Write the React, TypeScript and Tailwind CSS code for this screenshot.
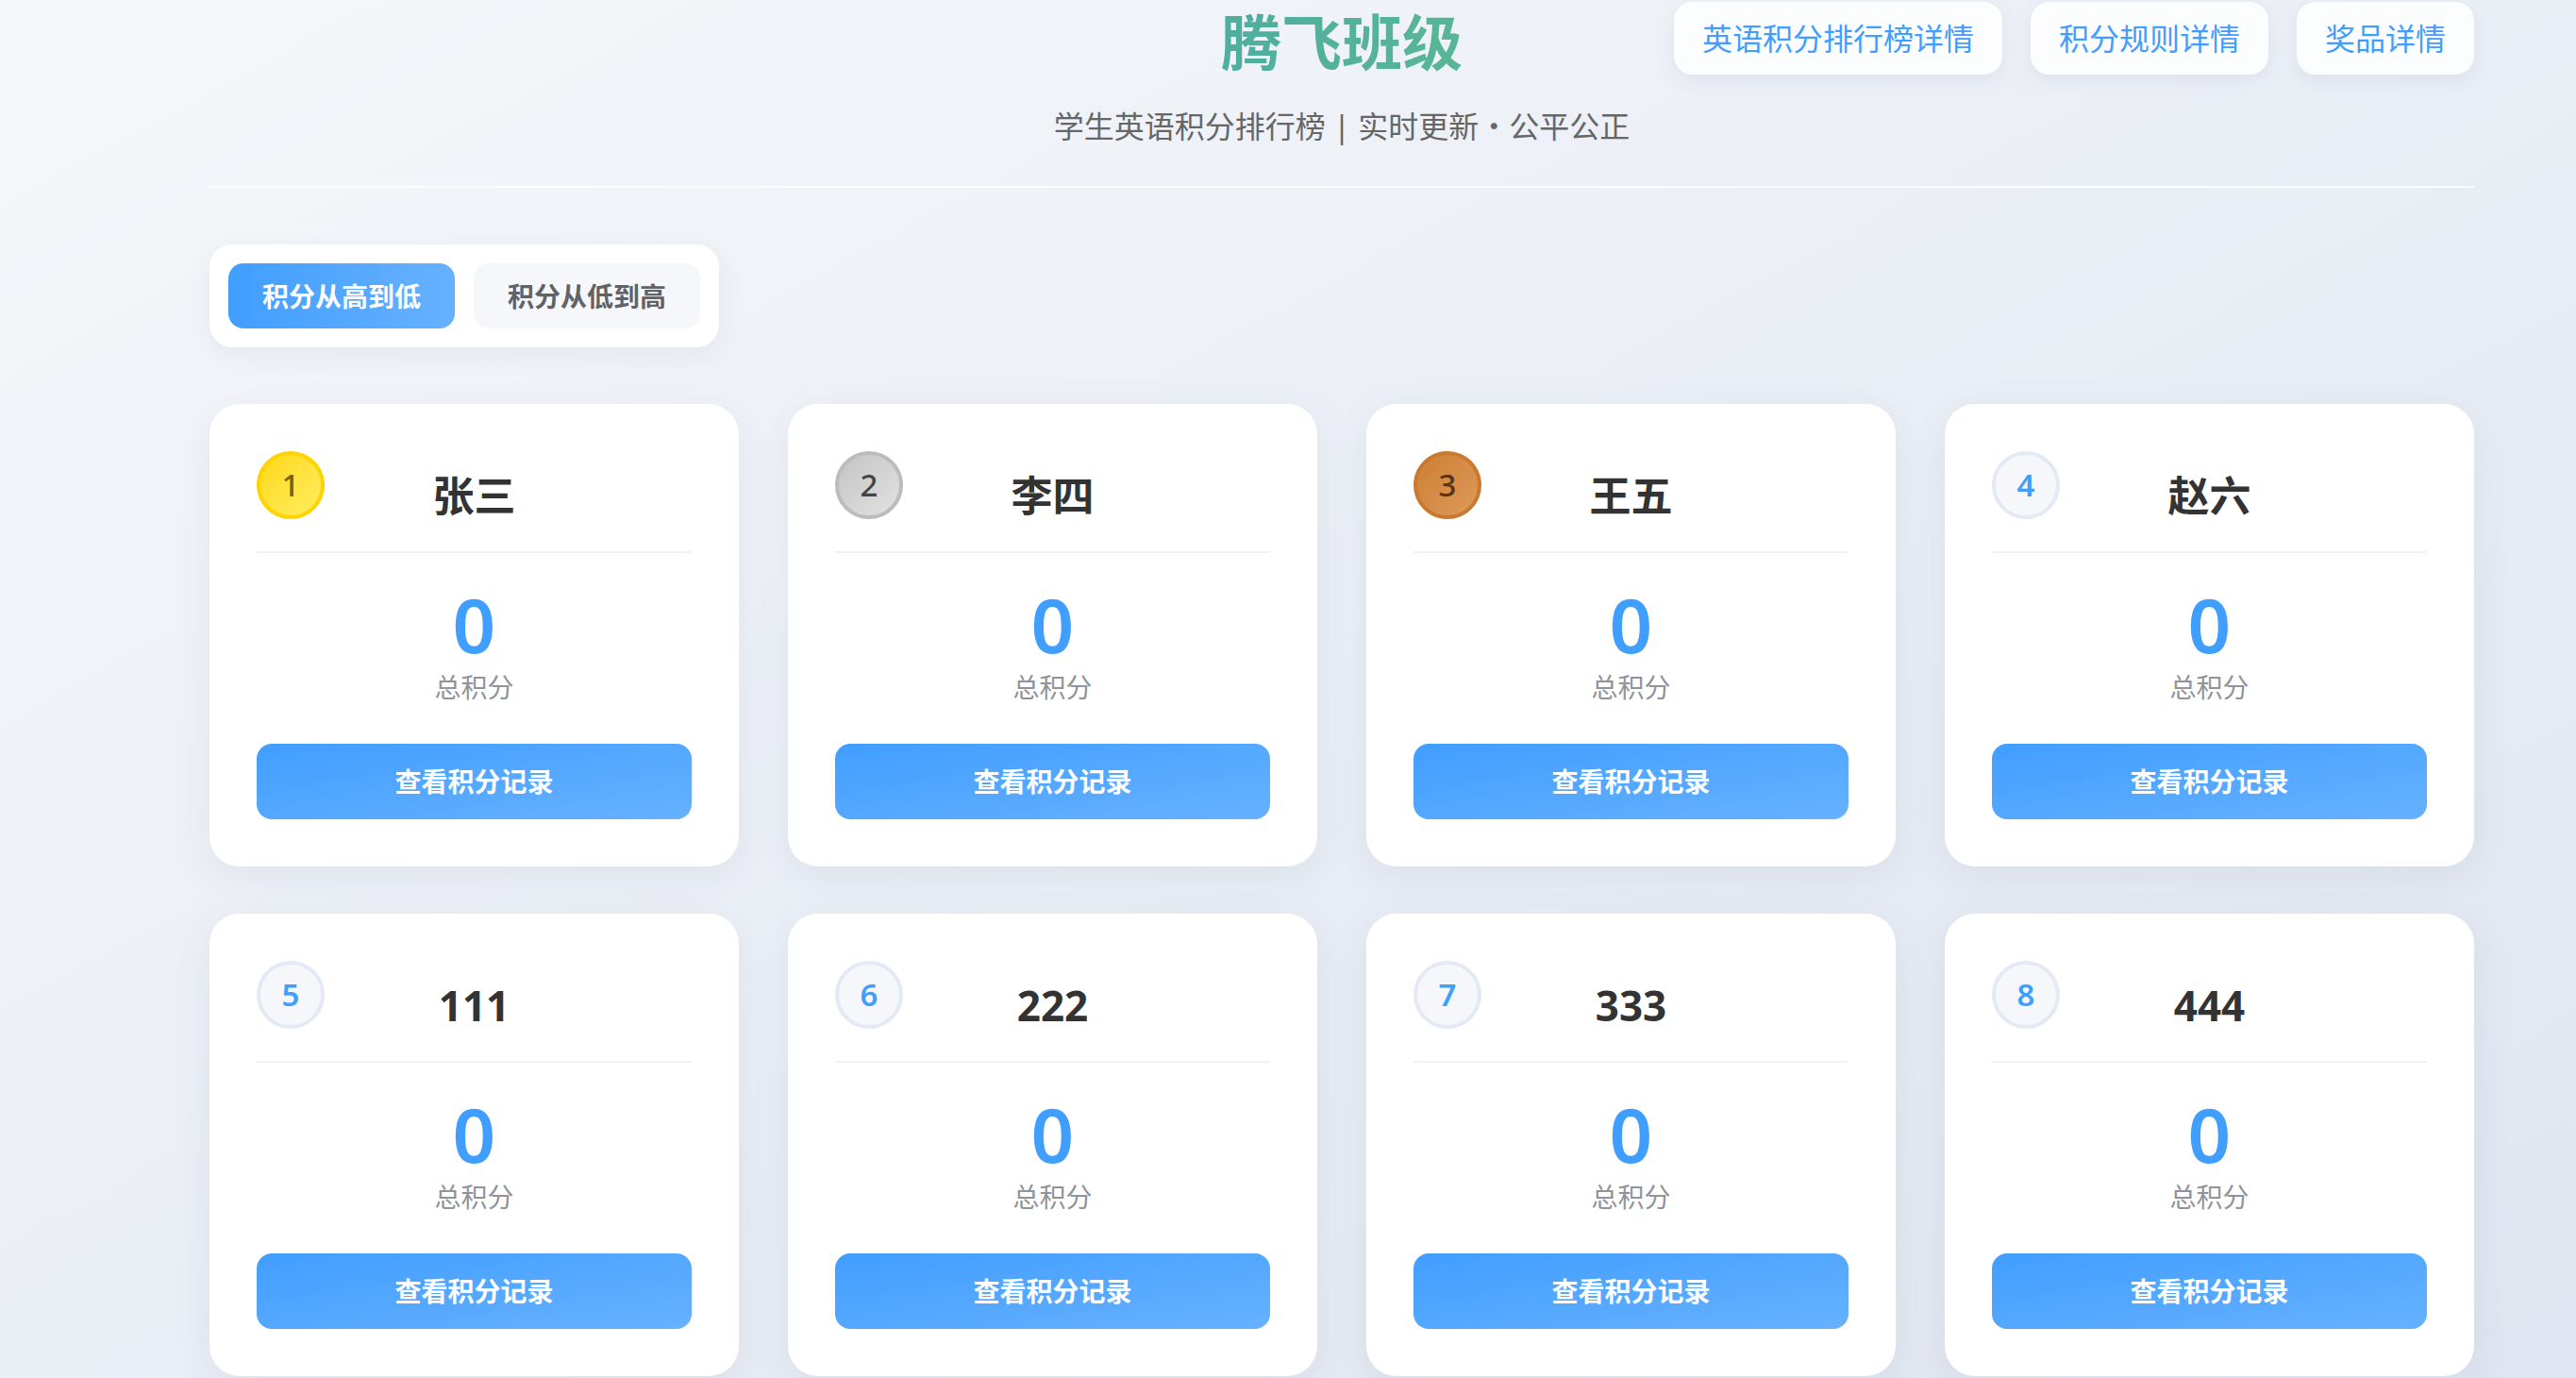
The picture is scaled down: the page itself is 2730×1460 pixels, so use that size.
const students = [
  { rank: 1, name: "张三", score: 0 },
  { rank: 2, name: "李四", score: 0 },
  { rank: 3, name: "王五", score: 0 },
  { rank: 4, name: "赵六", score: 0 },
  { rank: 5, name: "111", score: 0 },
  { rank: 6, name: "222", score: 0 },
  { rank: 7, name: "333", score: 0 },
  { rank: 8, name: "444", score: 0 },
];

function RankBadge({ rank }: { rank: number }) {
  let cls = "bg-[#f5f7fb] border-[#e3eaf6] text-[#409eff] font-semibold";
  if (rank === 1) cls = "bg-gradient-to-br from-[#ffd700] to-[#ffee5c] border-[#ffd200] text-[#7d5e00] font-medium";
  if (rank === 2) cls = "bg-gradient-to-br from-[#c4c4c4] to-[#e2e2e2] border-[#bcbcbc] text-[#444444] font-medium";
  if (rank === 3) cls = "bg-gradient-to-br from-[#cd7f32] to-[#dd9a5a] border-[#c97a30] text-[#5a3312] font-medium";
  return (
    <div className={`w-[72px] h-[72px] rounded-full border-[4px] flex items-center justify-center text-[33px] ${cls}`}>
      {rank}
    </div>
  );
}

function StudentCard({ rank, name, score }: { rank: number; name: string; score: number }) {
  return (
    <div className="bg-white rounded-[32px] p-[50px] shadow-[0_10px_40px_rgba(60,80,120,0.08)]">
      {/* header */}
      <div className="grid grid-cols-[72px_1fr_72px] items-start pb-[26px] border-b-2 border-[#f0f2f6]">
        <RankBadge rank={rank} />
        <div className="mt-[14px] text-center text-[44px] leading-[66px] font-bold text-[#333333]">{name}</div>
        <div />
      </div>

      {/* score */}
      <div className="mt-[35px] text-center">
        <div className="text-[80px] leading-[80px] font-semibold text-[#409eff]">{score}</div>
        <div className="mt-[7px] text-[28px] leading-[40px] text-[#909399]">总积分</div>
      </div>

      <button className="mt-[40px] w-full h-[80px] rounded-[16px] bg-gradient-to-br from-[#409eff] to-[#66b1ff] text-white text-[28px] font-bold">
        查看积分记录
      </button>
    </div>
  );
}

export default function App() {
  return (
    <div
      className="min-h-screen bg-gradient-to-br from-[#f5f7fa] to-[#dfe5f0]"
      style={{ fontFamily: '"Noto Sans", "Noto Sans CJK SC", sans-serif' }}
    >
      <div className="w-[2400px] ml-[222px] pt-[2px] pb-[40px]">
        {/* Header */}
        <div className="grid grid-cols-[1fr_auto_1fr] items-start">
          <div />
          <div className="text-center">
            <h1 className="mt-[4px] text-[64px] leading-[77px] font-bold bg-gradient-to-r from-[#48a8a6] to-[#5fbb8d] bg-clip-text text-transparent">
              腾飞班级
            </h1>
            <p className="mt-[27px] text-[32px] leading-[48px] text-[#666666]">
              学生英语积分排行榜 | 实时更新・公平公正
            </p>
          </div>
          <div className="flex justify-end gap-[30px]">
            {["英语积分排行榜详情", "积分规则详情", "奖品详情"].map((t) => (
              <button
                key={t}
                className="h-[77px] px-[30px] rounded-[20px] bg-[#fcfdff] text-[#409eff] text-[32px] shadow-[0_6px_20px_rgba(60,80,120,0.08)]"
              >
                {t}
              </button>
            ))}
          </div>
        </div>

        <div className="mt-[39px] h-[2px] bg-white/80" />

        {/* Sort controls */}
        <div className="mt-[60px] inline-flex gap-[20px] p-[20px] bg-white rounded-[24px] shadow-[0_8px_30px_rgba(60,80,120,0.07)]">
          <button className="w-[240px] h-[69px] rounded-[16px] bg-gradient-to-r from-[#409eff] to-[#66b1ff] text-white text-[28px] font-bold">
            积分从高到低
          </button>
          <button className="w-[240px] h-[69px] rounded-[16px] bg-[#f5f7fa] text-[#606266] text-[28px] font-bold">
            积分从低到高
          </button>
        </div>

        {/* Cards */}
        <div className="mt-[60px] grid grid-cols-4 gap-x-[52px] gap-y-[50px]">
          {students.map((s) => (
            <StudentCard key={s.rank} {...s} />
          ))}
        </div>
      </div>
    </div>
  );
}
